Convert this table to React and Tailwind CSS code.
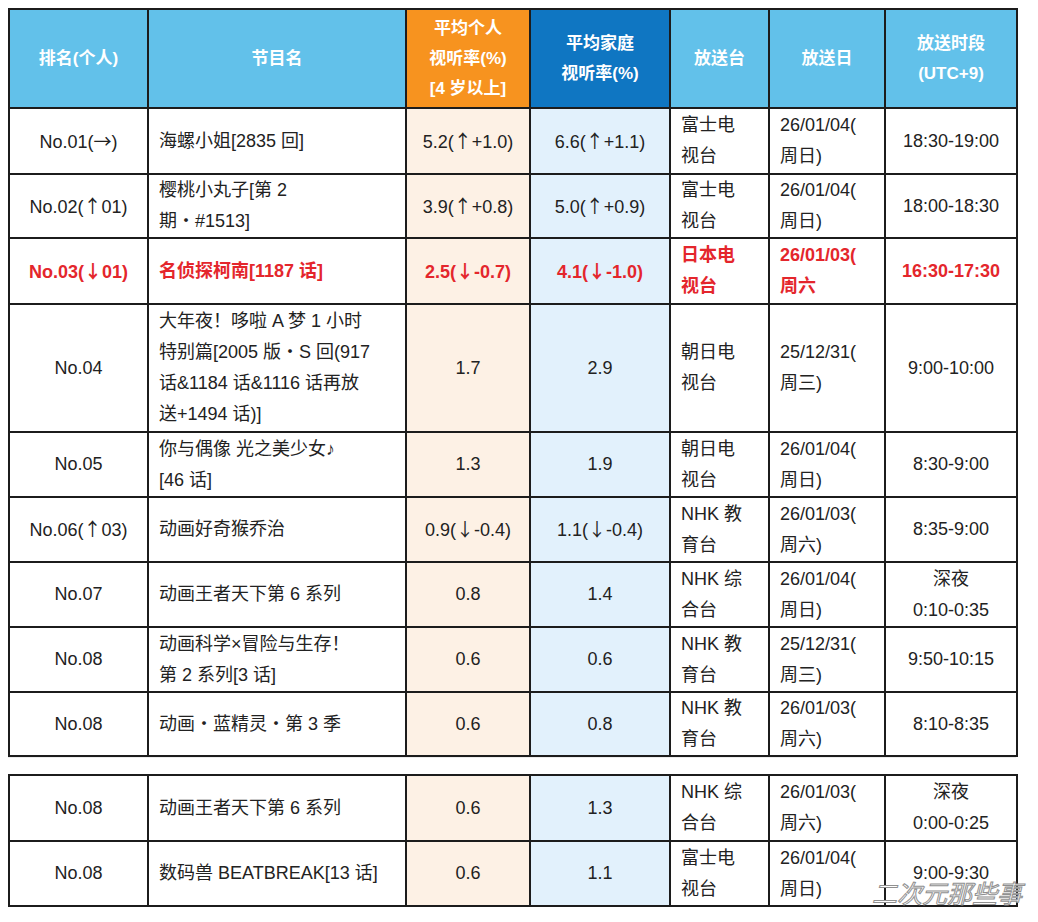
import React from 'react';

const rows = [
  { rank: 'No.01(→)', name: ['海螺小姐[2835 回]'], p: '5.2(↑+1.0)', h: '6.6(↑+1.1)', st: ['富士电', '视台'], date: ['26/01/04(', '周日)'], time: ['18:30-19:00'], hgt: 'h-[66px]' },
  { rank: 'No.02(↑01)', name: ['樱桃小丸子[第 2', '期・#1513]'], p: '3.9(↑+0.8)', h: '5.0(↑+0.9)', st: ['富士电', '视台'], date: ['26/01/04(', '周日)'], time: ['18:00-18:30'], hgt: 'h-[64px]' },
  { rank: 'No.03(↓01)', name: ['名侦探柯南[1187 话]'], p: '2.5(↓-0.7)', h: '4.1(↓-1.0)', st: ['日本电', '视台'], date: ['26/01/03(', '周六'], time: ['16:30-17:30'], hgt: 'h-[66px]', red: true },
  { rank: 'No.04', name: ['大年夜！哆啦 A 梦 1 小时', '特别篇[2005 版・S 回(917', '话&1184 话&1116 话再放', '送+1494 话)]'], p: '1.7', h: '2.9', st: ['朝日电', '视台'], date: ['25/12/31(', '周三)'], time: ['9:00-10:00'], hgt: 'h-[128px]' },
  { rank: 'No.05', name: ['你与偶像 光之美少女♪', '[46 话]'], p: '1.3', h: '1.9', st: ['朝日电', '视台'], date: ['26/01/04(', '周日)'], time: ['8:30-9:00'], hgt: 'h-[65px]' },
  { rank: 'No.06(↑03)', name: ['动画好奇猴乔治'], p: '0.9(↓-0.4)', h: '1.1(↓-0.4)', st: ['NHK 教', '育台'], date: ['26/01/03(', '周六)'], time: ['8:35-9:00'], hgt: 'h-[65px]' },
  { rank: 'No.07', name: ['动画王者天下第 6 系列'], p: '0.8', h: '1.4', st: ['NHK 综', '合台'], date: ['26/01/04(', '周日)'], time: ['深夜', '0:10-0:35'], hgt: 'h-[65px]' },
  { rank: 'No.08', name: ['动画科学×冒险与生存！', '第 2 系列[3 话]'], p: '0.6', h: '0.6', st: ['NHK 教', '育台'], date: ['25/12/31(', '周三)'], time: ['9:50-10:15'], hgt: 'h-[65px]' },
  { rank: 'No.08', name: ['动画・蓝精灵・第 3 季'], p: '0.6', h: '0.8', st: ['NHK 教', '育台'], date: ['26/01/03(', '周六)'], time: ['8:10-8:35'], hgt: 'h-[64px]' },
];

const rows2 = [
  { rank: 'No.08', name: ['动画王者天下第 6 系列'], p: '0.6', h: '1.3', st: ['NHK 综', '合台'], date: ['26/01/03(', '周六)'], time: ['深夜', '0:00-0:25'], hgt: 'h-[66px]' },
  { rank: 'No.08', name: ['数码兽 BEATBREAK[13 话]'], p: '0.6', h: '1.1', st: ['富士电', '视台'], date: ['26/01/04(', '周日)'], time: ['9:00-9:30'], hgt: 'h-[65px]' },
];

const Cols = () => (
  <colgroup>
    <col className="w-[139px]" />
    <col className="w-[258px]" />
    <col className="w-[124px]" />
    <col className="w-[140px]" />
    <col className="w-[99px]" />
    <col className="w-[116px]" />
    <col className="w-[132px]" />
  </colgroup>
);

// arrows look bigger in the CJK face, so split them out
const Txt = ({ s }) =>
  s.split(/([↑↓→])/).map((part, i) =>
    /[↑↓→]/.test(part) ? (
      <span key={i} className="font-['Noto_Sans_CJK_SC',sans-serif] tracking-[-3px] pr-[3px]">{part}</span>
    ) : (
      part
    )
  );

const Lines = ({ items }) => items.map((t, i) => <div key={i}>{t}</div>);

const Row = ({ r }) => {
  const txt = r.red ? 'text-[#e4262c] font-bold' : 'text-[#222]';
  const td = 'border-2 border-[#1c1c1c] leading-[31px] ' + txt;
  return (
    <tr className={r.hgt}>
      <td className={td + ' text-center'}><Txt s={r.rank} /></td>
      <td className={td + ' pl-[10px]'}><Lines items={r.name} /></td>
      <td className={td + ' text-center bg-[#fdf1e5]'}><Txt s={r.p} /></td>
      <td className={td + ' text-center bg-[#e2f1fc]'}><Txt s={r.h} /></td>
      <td className={td + ' pl-[10px]'}><Lines items={r.st} /></td>
      <td className={td + ' pl-[10px]'}><Lines items={r.date} /></td>
      <td className={td + ' text-center'}><Lines items={r.time} /></td>
    </tr>
  );
};

export default function App() {
  const th = 'border-2 border-[#1c1c1c] text-white font-bold text-[17px] leading-[30px] text-center';
  return (
    <div className="relative w-[1038px] h-[922px] bg-white pt-[8px] pl-[8px] text-[18px] font-['Liberation_Sans','Noto_Sans_CJK_SC',sans-serif]">
      <table className="table-fixed border-collapse w-[1008px]">
        <Cols />
        <thead>
          <tr className="h-[99px]">
            <th className={th + ' bg-[#62c1ea]'}>排名(个人)</th>
            <th className={th + ' bg-[#62c1ea]'}>节目名</th>
            <th className={th + ' bg-[#f7931f]'}>平均个人<br />视听率(%)<br />[4 岁以上]</th>
            <th className={th + ' bg-[#0f76c2]'}>平均家庭<br />视听率(%)</th>
            <th className={th + ' bg-[#62c1ea]'}>放送台</th>
            <th className={th + ' bg-[#62c1ea]'}>放送日</th>
            <th className={th + ' bg-[#62c1ea]'}>放送时段<br />(UTC+9)</th>
          </tr>
        </thead>
        <tbody>
          {rows.map((r, i) => <Row key={i} r={r} />)}
        </tbody>
      </table>
      <div className="h-[17px] w-[1008px] border-t border-[#ececec]" />
      <table className="table-fixed border-collapse w-[1008px]">
        <Cols />
        <tbody>
          {rows2.map((r, i) => <Row key={i} r={r} />)}
        </tbody>
      </table>
      <div className="absolute left-[872px] top-[877px] text-[25px] leading-[30px] italic text-white [-webkit-text-stroke:1px_#909090] font-['Noto_Sans_CJK_SC',sans-serif]">
        二次元那些事
      </div>
    </div>
  );
}
